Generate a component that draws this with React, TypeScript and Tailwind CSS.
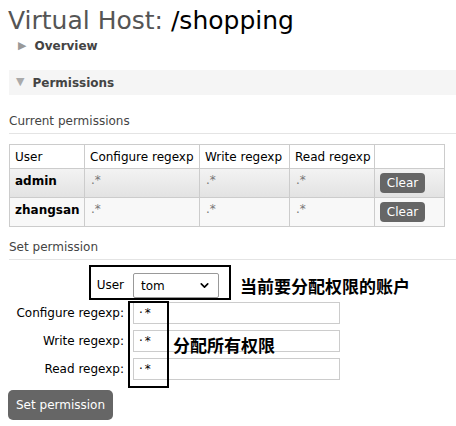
import { ChevronDown } from "lucide-react"

const rows = [
  { user: "admin", bg: "bg-gradient-to-b from-[#f3f3f3] to-[#e2e2e2]" },
  { user: "zhangsan", bg: "bg-[#f8f8f8]" },
]

const Regex = () => <span className="text-[#777]">.*</span>

export default function App() {
  return (
    <div className="w-[456px] h-[426px] bg-white text-[12px] text-[#333] font-['DejaVu_Sans',Verdana,sans-serif] relative overflow-hidden">
      <h1 className="pl-[8px] pt-[5px] text-[25px] leading-[31px]">
        <span className="text-[#555]">Virtual Host: </span>
        <span className="text-black">/shopping</span>
      </h1>

      <div className="flex items-center pl-[18px] h-[20px] mt-[0px]">
        <span className="text-[#999] text-[11px] mr-[8px]">▶</span>
        <span className="font-bold text-[#444]">Overview</span>
      </div>

      <div className="flex items-center ml-[9px] mt-[14px] h-[25px] bg-[#f5f5f5] pl-[7px]">
        <span className="text-[#aaa] text-[11px] mr-[8px]">▼</span>
        <span className="font-bold text-[#444]">Permissions</span>
      </div>

      <div className="ml-[9px] mt-[17px] pb-[3px] border-b border-[#e4e4e4] text-[#444]">
        Current permissions
      </div>

      <table className="ml-[9px] mt-[10px] w-[436px] table-fixed border-collapse border border-[#ccc] whitespace-nowrap">
        <thead>
          <tr className="h-[24px] text-black">
            <th className="w-[75px] font-normal text-left px-[5px] border border-[#ccc]">User</th>
            <th className="w-[115px] font-normal text-left px-[5px] border border-[#ccc]">Configure regexp</th>
            <th className="w-[90px] font-normal text-left px-[5px] border border-[#ccc]">Write regexp</th>
            <th className="w-[85px] font-normal text-left px-[5px] border border-[#ccc]">Read regexp</th>
            <th className="border border-[#ccc]"></th>
          </tr>
        </thead>
        <tbody>
          {rows.map((r) => (
            <tr key={r.user} className={`h-[29px] ${r.bg}`}>
              <td className="align-top pt-[3px] px-[5px] font-bold text-black border border-[#ccc]">{r.user}</td>
              <td className="align-top pt-[2px] px-[6px] border border-[#ccc]"><Regex /></td>
              <td className="align-top pt-[2px] px-[6px] border border-[#ccc]"><Regex /></td>
              <td className="align-top pt-[2px] px-[6px] border border-[#ccc]"><Regex /></td>
              <td className="px-[5px] border border-[#ccc]">
                <button className="h-[20px] w-[45px] rounded-[4px] bg-[#666] text-white text-[12px] leading-[20px] block">Clear</button>
              </td>
            </tr>
          ))}
        </tbody>
      </table>

      <div className="ml-[9px] mt-[11px] pb-[3px] border-b border-[#e4e4e4] text-[#444]">
        Set permission
      </div>

      <div className="relative mt-[13px] grid grid-cols-[124px_auto] gap-x-[9px] gap-y-[6px] items-center">
        <div className="text-right self-start pt-[3px] text-black">User</div>
        <div className="flex items-center h-[25px] -mb-[2px]">
          <div className="w-[86px] h-[25px] border border-[#999] rounded-[2px] flex items-center justify-between px-[7px] text-black">
            <span>tom</span>
            <ChevronDown size={13} strokeWidth={3} />
          </div>
          <span className="ml-[21px] text-[17px] font-bold text-black font-['Noto_Sans_CJK_SC',sans-serif]">当前要分配权限的账户</span>
        </div>

        {["Configure regexp:", "Write regexp:", "Read regexp:"].map((l) => (
          <div key={l} className="contents">
            <div className="text-right text-black">{l}</div>
            <div className="w-[207px] h-[22px] border border-[#ccc] flex items-center px-[5px] text-black">
              <span className="tracking-[2px]">·*</span>
            </div>
          </div>
        ))}

        <div className="absolute left-[89px] top-[-8px] w-[142px] h-[35px] border-2 border-black"></div>
        <div className="absolute left-[128px] top-[28px] w-[41px] h-[87px] border-2 border-black"></div>
        <span className="absolute left-[173px] top-[59px] text-[17px] font-bold text-black font-['Noto_Sans_CJK_SC',sans-serif]">分配所有权限</span>
      </div>

      <button className="ml-[8px] mt-[10px] h-[30px] px-[8px] rounded-[5px] bg-[#666] text-white text-[12px]">Set permission</button>
    </div>
  )
}
